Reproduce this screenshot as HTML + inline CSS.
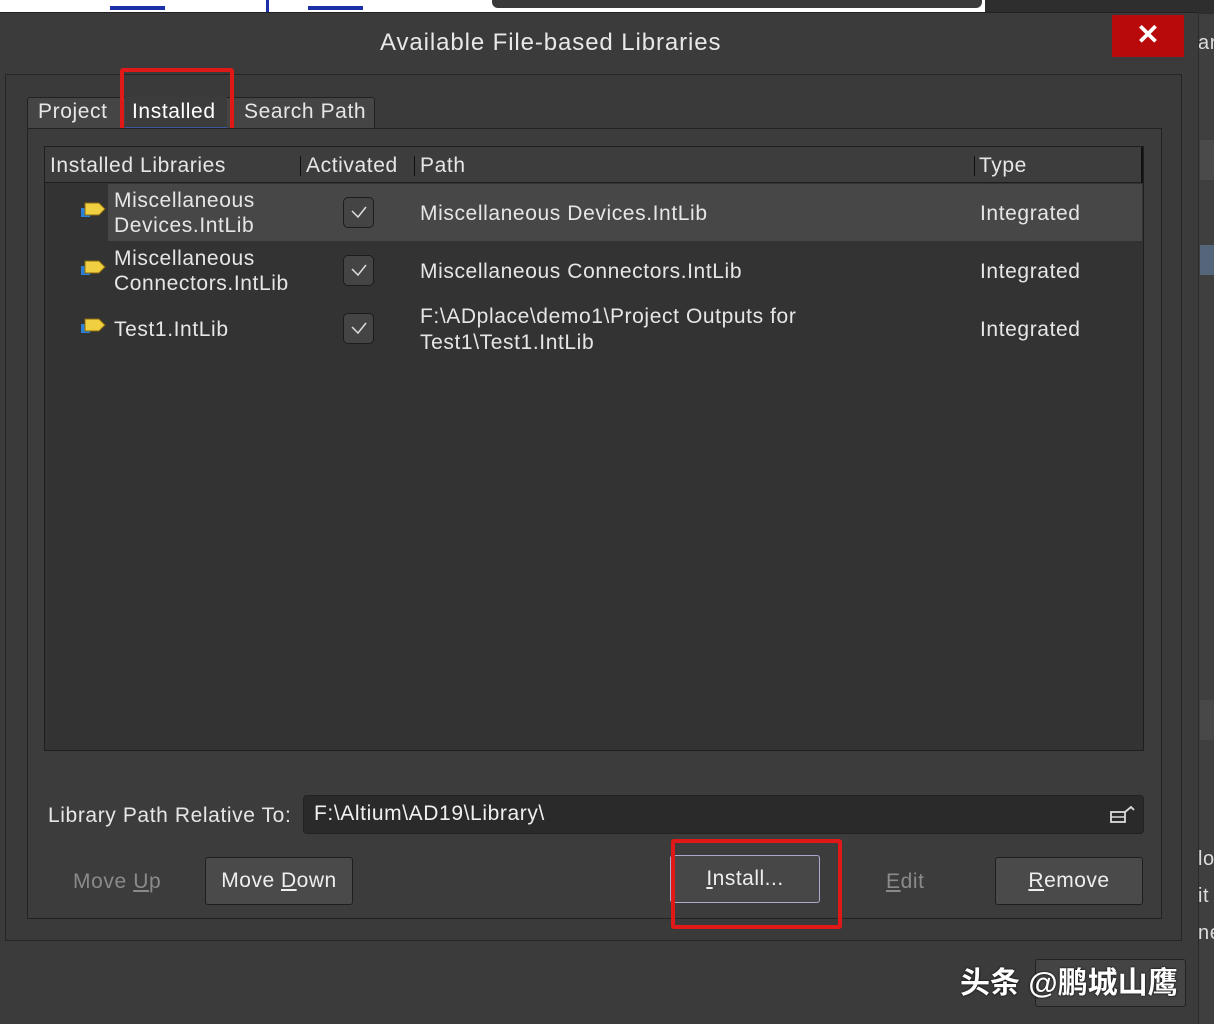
<!DOCTYPE html>
<html><head><meta charset="utf-8"><style>
*{margin:0;padding:0;box-sizing:border-box}
body{width:1214px;height:1024px;overflow:hidden;background:#3b3b3b;font-family:"Liberation Sans","Noto Sans CJK SC",sans-serif;color:#e6e6e6;position:relative}
.a{position:absolute}
.t{font-size:21px;white-space:nowrap;letter-spacing:0.6px}
.btn{position:absolute;border:1px solid #1e1e1e;border-radius:3px;background:#4a4a4a;font-size:21px;text-align:center;line-height:46px;color:#eee;letter-spacing:0.5px}
.cb{position:absolute;left:343px;width:31px;height:31px;border:1px solid #1c1c1c;border-radius:5px;background:#444}
.cb svg{position:absolute;left:6px;top:7px}
.ic{position:absolute;left:80px;width:28px;height:20px}
</style></head><body>
<div class="a" style="left:0;top:0;width:985px;height:12px;background:#fff"></div>
<div class="a" style="left:110px;top:6px;width:55px;height:4px;background:#1a2fa8"></div>
<div class="a" style="left:308px;top:6px;width:55px;height:4px;background:#1a2fa8"></div>
<div class="a" style="left:266px;top:0;width:3px;height:12px;background:#1a2fa8"></div>
<div class="a" style="left:492px;top:0;width:490px;height:8px;background:#3a3a3a;border-radius:0 0 6px 6px"></div>
<div class="a" style="left:985px;top:0;width:229px;height:14px;background:#2e2e2e"></div>
<div class="a" style="left:1198px;top:14px;width:16px;height:1010px;background:#3f3f3f;border-left:1px solid #2a2a2a"></div>
<div class="a" style="left:1200px;top:140px;width:14px;height:40px;background:#4a4a4a"></div>
<div class="a" style="left:1200px;top:245px;width:14px;height:30px;background:#55667a"></div>
<div class="a" style="left:1200px;top:700px;width:14px;height:40px;background:#484848"></div>
<div class="a t" style="left:1198px;top:32px;font-size:20px;color:#ddd">ar</div>
<div class="a t" style="left:1198px;top:848px;font-size:20px;color:#ddd">lo</div>
<div class="a t" style="left:1198px;top:885px;font-size:20px;color:#ddd">it</div>
<div class="a t" style="left:1198px;top:922px;font-size:20px;color:#ddd">ne</div>
<div class="a" style="left:0;top:12px;width:1198px;height:1012px;background:#3b3b3b;border-top:1px solid #222"></div>
<div class="a t" style="left:380px;top:29px;font-size:24px;color:#e8e8e8;letter-spacing:0.9px">Available File-based Libraries</div>
<div class="a" style="left:1112px;top:15px;width:72px;height:42px;background:#b80a0a"></div>
<div class="a" style="left:1132px;top:18px;width:32px;text-align:center;font-size:28px;font-weight:bold;color:#fff">✕</div>
<div class="a" style="left:5px;top:74px;width:1177px;height:867px;border:1px solid #252525;background:#3a3a3a"></div>
<div class="a" style="left:27px;top:97px;width:348px;height:32px;background:#454545;border:1px solid #222;border-bottom:none;border-radius:3px 3px 0 0"></div>
<div class="a" style="left:125px;top:97px;width:102px;height:32px;background:#3c3c3c;border-bottom:2px solid #3a5aa0"></div>
<div class="a t" style="left:38px;top:100px">Project</div>
<div class="a t" style="left:132px;top:100px;color:#fff">Installed</div>
<div class="a t" style="left:244px;top:100px">Search Path</div>
<div class="a" style="left:120px;top:68px;width:114px;height:65px;border:4px solid #e01818;border-radius:3px"></div>
<div class="a" style="left:27px;top:128px;width:1135px;height:791px;border:1px solid #222;background:#3c3c3c"></div>
<div class="a" style="left:44px;top:146px;width:1100px;height:605px;border:1px solid #1e1e1e;background:#333"></div>
<div class="a" style="left:45px;top:147px;width:1097px;height:36px;background:#3d3d3d;border-bottom:1px solid #1e1e1e"></div>
<div class="a t" style="left:50px;top:154px">Installed Libraries</div>
<div class="a" style="left:300px;top:156px;width:1px;height:20px;background:#111"></div>
<div class="a t" style="left:306px;top:154px">Activated</div>
<div class="a" style="left:414px;top:156px;width:1px;height:20px;background:#111"></div>
<div class="a t" style="left:420px;top:154px">Path</div>
<div class="a" style="left:974px;top:156px;width:1px;height:20px;background:#111"></div>
<div class="a t" style="left:979px;top:154px">Type</div>
<div class="a" style="left:1141px;top:147px;width:2px;height:36px;background:#111"></div>
<div class="a" style="left:108px;top:184px;width:1034px;height:57px;background:#474747"></div>
<svg class="ic" style="top:200px" viewBox="0 0 28 20"><rect x="1" y="8" width="9" height="9" fill="#2a7fd6"/><path d="M5 3h14l6 6-6 6H5z" fill="#f0d040" stroke="#8a6a10"/></svg>
<svg class="ic" style="top:258px" viewBox="0 0 28 20"><rect x="1" y="8" width="9" height="9" fill="#2a7fd6"/><path d="M5 3h14l6 6-6 6H5z" fill="#f0d040" stroke="#8a6a10"/></svg>
<svg class="ic" style="top:316px" viewBox="0 0 28 20"><rect x="1" y="8" width="9" height="9" fill="#2a7fd6"/><path d="M5 3h14l6 6-6 6H5z" fill="#f0d040" stroke="#8a6a10"/></svg>
<div class="a t" style="left:114px;top:188px;line-height:25px">Miscellaneous<br>Devices.IntLib</div>
<div class="a t" style="left:114px;top:246px;line-height:25px">Miscellaneous<br>Connectors.IntLib</div>
<div class="a t" style="left:114px;top:318px">Test1.IntLib</div>
<div class="cb" style="top:197px"><svg width="18" height="14"><path d="M2 6l6 6 8-10" fill="none" stroke="#ddd" stroke-width="1.5"/></svg></div>
<div class="cb" style="top:255px"><svg width="18" height="14"><path d="M2 6l6 6 8-10" fill="none" stroke="#ddd" stroke-width="1.5"/></svg></div>
<div class="cb" style="top:313px"><svg width="18" height="14"><path d="M2 6l6 6 8-10" fill="none" stroke="#ddd" stroke-width="1.5"/></svg></div>
<div class="a t" style="left:420px;top:202px">Miscellaneous Devices.IntLib</div>
<div class="a t" style="left:420px;top:260px">Miscellaneous Connectors.IntLib</div>
<div class="a t" style="left:420px;top:304px;line-height:26px">F:\ADplace\demo1\Project Outputs for<br>Test1\Test1.IntLib</div>
<div class="a t" style="left:980px;top:202px">Integrated</div>
<div class="a t" style="left:980px;top:260px">Integrated</div>
<div class="a t" style="left:980px;top:318px">Integrated</div>
<div class="a t" style="left:48px;top:804px">Library Path Relative To:</div>
<div class="a" style="left:303px;top:795px;width:841px;height:39px;background:#2a2a2a;border-radius:4px;border:1px solid #222"></div>
<div class="a t" style="left:314px;top:802px;color:#f0f0f0">F:\Altium\AD19\Library\</div>
<svg class="a" style="left:1108px;top:803px" width="30" height="24"><rect x="3" y="9" width="14" height="10" fill="none" stroke="#ddd" stroke-width="1.8"/><line x1="3" y1="14" x2="17" y2="14" stroke="#ddd" stroke-width="1.5"/><path d="M17 9l6-5 3 3" fill="none" stroke="#ddd" stroke-width="1.8"/></svg>
<div class="a t" style="left:73px;top:870px;color:#8a8a8a">Move <u>U</u>p</div>
<div class="btn" style="left:205px;top:857px;width:148px;height:48px">Move <u>D</u>own</div>
<div class="btn" style="left:670px;top:855px;width:150px;height:48px;border:1px solid #aac;background:#474747"><u>I</u>nstall...</div>
<div class="a" style="left:671px;top:839px;width:171px;height:90px;border:4px solid #e01818;border-radius:3px"></div>
<div class="a t" style="left:886px;top:870px;color:#8a8a8a"><u>E</u>dit</div>
<div class="btn" style="left:995px;top:857px;width:148px;height:48px"><u>R</u>emove</div>
<div class="a" style="left:1035px;top:959px;width:151px;height:48px;border:1px solid #222;border-radius:3px;background:#444"></div>
<div class="a" style="left:960px;top:958px;font-size:30px;font-weight:bold;color:#fff;white-space:nowrap;text-shadow:0 0 2px #000">头条 @鹏城山鹰</div>
</body></html>
